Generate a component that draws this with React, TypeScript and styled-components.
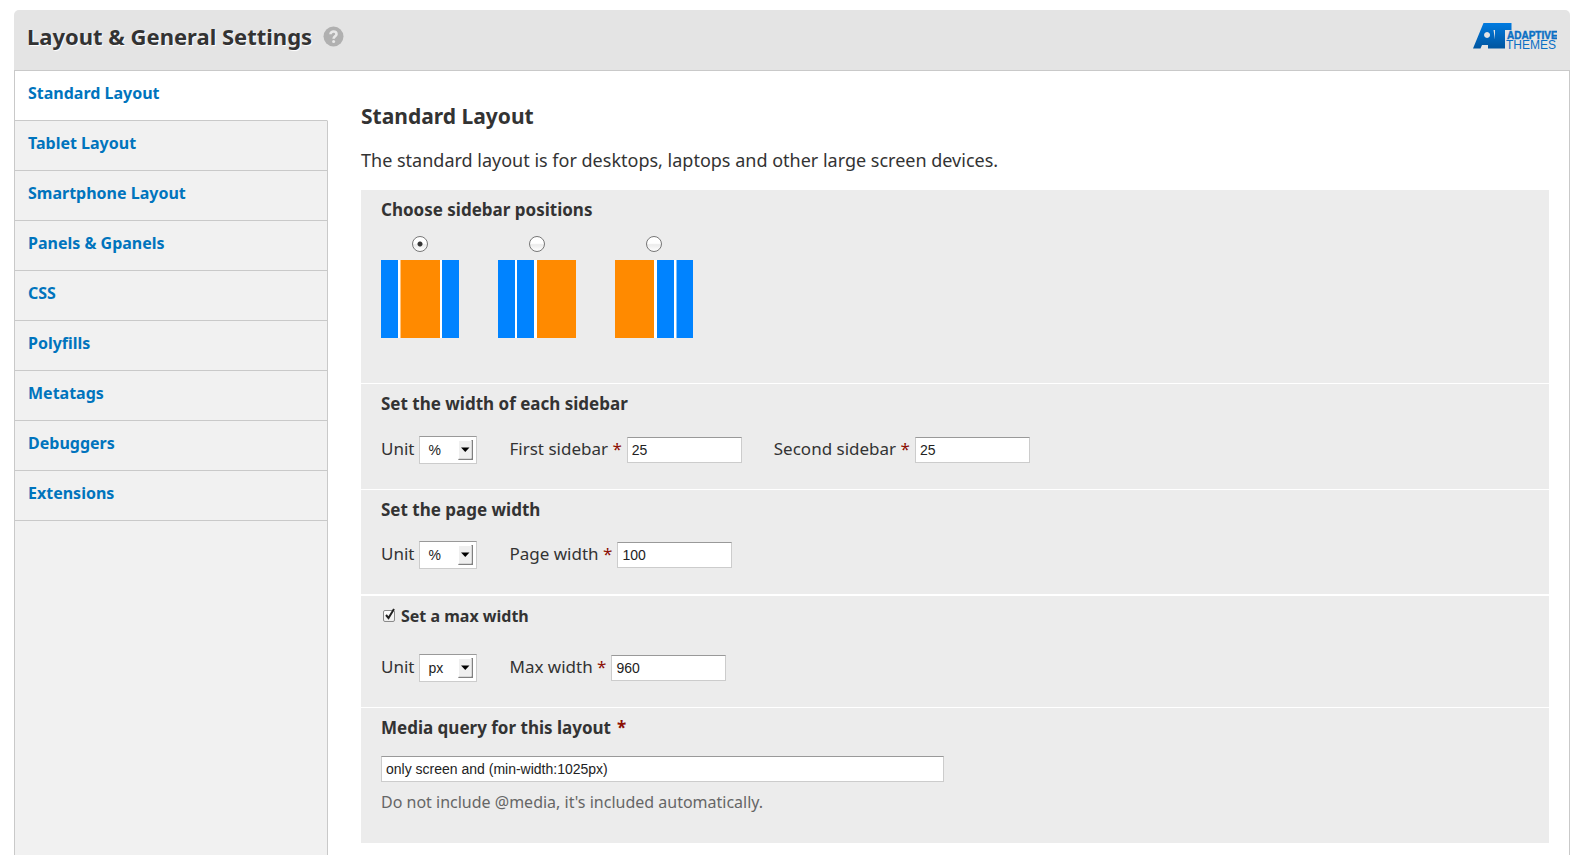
import React, { useState } from 'react';
import styled, { createGlobalStyle } from 'styled-components';

const GlobalStyle = createGlobalStyle`
  * { box-sizing: border-box; }
  html, body, #root { height: 100%; }
  body {
    margin: 0;
    background: #fff;
    color: #333;
    font-family: "Noto Sans", "Open Sans", sans-serif;
    font-size: 17px;
    line-height: 24px;
  }
`;

const Page = styled.div`
  display: flex;
  flex-direction: column;
  min-height: 100%;
  padding: 10px 7px 0 14px;
`;

const Header = styled.header`
  display: flex;
  justify-content: space-between;
  align-items: flex-start;
  height: 60px;
  padding: 11px 13px 0 13px;
  background: #e4e4e4;
  border-radius: 5px 5px 0 0;
`;

const TitleGroup = styled.div`
  display: flex;
  align-items: center;
  gap: 11px;
`;

const Title = styled.h1`
  margin: 0;
  font-size: 22px;
  line-height: 30px;
  font-weight: 700;
  text-shadow: 1px 1px 1px #fff;
`;

const HelpButton = styled.button`
  display: flex;
  padding: 0;
  border: 0;
  background: none;
`;

const LogoLink = styled.a`
  display: block;
  padding-top: 2px;
`;

const Body = styled.div`
  display: flex;
  flex: 1;
  border: 1px solid #c9c9c9;
  border-bottom: 0;
`;

const Nav = styled.nav`
  width: 313px;
  flex: none;
  display: flex;
  flex-direction: column;
`;

const Tab = styled.a<{ $active?: boolean }>`
  display: block;
  height: 50px;
  padding: 10px 13px 0;
  font-size: 16px;
  font-weight: 700;
  color: #0074bd;
  text-decoration: none;
  background: ${p => (p.$active ? '#fff' : '#f1f1f1')};
  border-bottom: 1px solid #c9c9c9;
  border-right: 1px solid ${p => (p.$active ? '#fff' : '#c9c9c9')};
`;

const NavFill = styled.div`
  flex: 1;
  background: #f1f1f1;
  border-right: 1px solid #c9c9c9;
`;

const Main = styled.main`
  flex: 1;
  padding: 30px 20px 12px 33px;
`;

const PaneTitle = styled.h2`
  margin: 0 0 17px;
  font-size: 21px;
  line-height: 30px;
  font-weight: 700;
`;

const Intro = styled.p`
  margin: 0 0 18px;
  font-size: 18px;
`;

const Panel = styled.form`
  background: #ececec;
`;

const Section = styled.section<{ $bottom: number; $rule?: number }>`
  padding: 8px 20px ${p => p.$bottom}px;
  border-bottom: ${p => p.$rule ?? 1}px solid #fff;
`;

const Heading = styled.h3<{ $gap: number; $small?: boolean }>`
  display: flex;
  align-items: center;
  gap: 6px;
  margin: 0 0 ${p => p.$gap}px;
  font-size: ${p => (p.$small ? 16 : 17)}px;
  line-height: 24px;
  font-weight: 700;
`;

const Required = styled.span`
  color: #8c0f04;
`;

const Choices = styled.div`
  display: flex;
  gap: 39px;
`;

const Choice = styled.label`
  display: flex;
  flex-direction: column;
  align-items: center;
  gap: 8px;
`;

const Radio = styled.input`
  appearance: none;
  width: 16px;
  height: 16px;
  margin: 0;
  border: 1px solid #777;
  border-radius: 50%;
  background: linear-gradient(#fff 0 45%, #ebebeb 55%, #fff);
  &:checked {
    background: radial-gradient(circle, #333 0 2px, transparent 3px), linear-gradient(#fff 0 45%, #ebebeb 55%, #fff);
  }
`;

const Fields = styled.div`
  display: flex;
  align-items: center;
  gap: 32px;
`;

const Field = styled.label`
  display: flex;
  align-items: center;
  gap: 5px;
`;

const FieldLabel = styled.span`
  padding-bottom: 2px;
`;

const TextInput = styled.input<{ $wide?: boolean }>`
  display: block;
  width: ${p => (p.$wide ? '563px' : '115px')};
  max-width: 100%;
  height: 26px;
  padding: 0 4px;
  border: 1px solid #ccc;
  border-top-color: #999;
  border-radius: 0;
  background: #fff;
  color: #222;
  font: 14px "Liberation Sans", Arial, sans-serif;
`;

const SelectBox = styled.span`
  position: relative;
  display: block;
`;

const Select = styled.select`
  appearance: none;
  display: block;
  width: 58px;
  height: 28px;
  padding: 0 8px;
  border: 1px solid #ccc;
  border-top-color: #999;
  border-radius: 0;
  background: #fff;
  color: #222;
  font: 14px "Liberation Sans", Arial, sans-serif;
`;

const Arrow = styled.svg`
  position: absolute;
  right: 4px;
  top: 4px;
  pointer-events: none;
`;

const Check = styled.span`
  position: relative;
  display: flex;
  padding-left: 2px;
  svg { position: absolute; left: 2px; top: -3px; pointer-events: none; }
`;

const Checkbox = styled.input`
  appearance: none;
  width: 12px;
  height: 12px;
  margin: 0;
  border: 1px solid #8a8a8a;
  border-radius: 2px;
  background: linear-gradient(#fff, #eee);
  &:not(:checked) + svg { display: none; }
`;

const HelpText = styled.p`
  margin: 8px 0 0;
  font-size: 16px;
  color: #666;
`;

const tabs = ['Standard Layout', 'Tablet Layout', 'Smartphone Layout', 'Panels & Gpanels', 'CSS', 'Polyfills', 'Metatags', 'Debuggers', 'Extensions'];

const BLUE = '#0083ff';
const ORANGE = '#ff8a00';

type Column = [x: number, width: number, color: string];
const layouts: { name: string; columns: Column[] }[] = [
  { name: 'Sidebars on both sides', columns: [[0, 17, BLUE], [19.5, 39.5, ORANGE], [61, 17, BLUE]] },
  { name: 'Both sidebars left', columns: [[0, 17, BLUE], [19, 17, BLUE], [39, 39, ORANGE]] },
  { name: 'Both sidebars right', columns: [[0, 39, ORANGE], [42, 17, BLUE], [61.5, 16.5, BLUE]] },
];

function UnitSelect({ unit }: { unit: string }) {
  return (
    <Field>
      <FieldLabel>Unit</FieldLabel>
      <SelectBox>
        <Select defaultValue={unit}>
          <option>%</option>
          <option>px</option>
          <option>em</option>
        </Select>
        <Arrow width="15" height="20" viewBox="0 0 15 20">
          <path d="M0 20L1 18.5H13.5V0H15V20Z" fill="#808080" />
          <path d="M1 1H13.5V18.5H1Z" fill="#efefef" />
          <path d="M3 7.5H11.5L7.25 12Z" fill="#000" />
        </Arrow>
      </SelectBox>
    </Field>
  );
}

function RequiredField({ label, value }: { label: string; value: string }) {
  return (
    <Field>
      <FieldLabel>{label} <Required>*</Required></FieldLabel>
      <TextInput defaultValue={value} />
    </Field>
  );
}

function Logo() {
  return (
    <svg width="84" height="28" viewBox="0 0 84 28" role="img" aria-label="Adaptive Themes">
      <defs>
        <linearGradient id="mark" x1="0" y1="0" x2="0" y2="1">
          <stop offset="0" stopColor="#007be0" />
          <stop offset="1" stopColor="#00559f" />
        </linearGradient>
      </defs>
      <path fillRule="evenodd" fill="url(#mark)" d="M10.500 0H38.500V7H32V25.500H15V22H9L7.500 25.500H0ZM14 9a3 3 0 1 0 0.1 0ZM20.500 7L22 16.500V7Z" />
      <text x="34" y="16" fontFamily="Liberation Sans" fontWeight="700" fontSize="10" fill="#0a6fc4" stroke="#0a6fc4" strokeWidth="0.4">ADAPTIVE</text>
      <text x="33" y="26" fontFamily="Liberation Sans" fontSize="12" fill="#0a6fc4">THEMES</text>
    </svg>
  );
}

export default function App() {
  const [position, setPosition] = useState(0);
  return (
    <>
      <GlobalStyle />
      <Page>
        <Header>
          <TitleGroup>
            <Title>Layout &amp; General Settings</Title>
            <HelpButton type="button" aria-label="Help">
              <svg width="21" height="21" viewBox="0 0 21 21">
                <circle cx="10.5" cy="10.5" r="10" fill="#b0b0b0" />
                <path d="M7.500 8.200C7.500 4.500 13.500 4.700 13.500 8.200C13.500 10.300 10.600 10.400 10.600 12.800" fill="none" stroke="#e8e8e8" strokeWidth="2.6" />
                <circle cx="10.600" cy="15.600" r="1.500" fill="#e8e8e8" />
              </svg>
            </HelpButton>
          </TitleGroup>
          <LogoLink href="#"><Logo /></LogoLink>
        </Header>
        <Body>
          <Nav>
            {tabs.map((tab, i) => <Tab key={tab} href="#" $active={i === 0}>{tab}</Tab>)}
            <NavFill />
          </Nav>
          <Main>
            <PaneTitle>Standard Layout</PaneTitle>
            <Intro>The standard layout is for desktops, laptops and other large screen devices.</Intro>
            <Panel>
              <Section $bottom={45}>
                <Heading $gap={14}>Choose sidebar positions</Heading>
                <Choices>
                  {layouts.map((layout, i) => (
                    <Choice key={layout.name}>
                      <Radio type="radio" name="position" aria-label={layout.name} checked={position === i} onChange={() => setPosition(i)} />
                      <svg width="78" height="78" viewBox="0 0 78 78">
                        <rect width="78" height="78" fill="#fff" />
                        {layout.columns.map(([x, width, color]) => <rect key={x} x={x} width={width} height="78" fill={color} />)}
                      </svg>
                    </Choice>
                  ))}
                </Choices>
              </Section>
              <Section $bottom={25}>
                <Heading $gap={20}>Set the width of each sidebar</Heading>
                <Fields>
                  <UnitSelect unit="%" />
                  <RequiredField label="First sidebar" value="25" />
                  <RequiredField label="Second sidebar" value="25" />
                </Fields>
              </Section>
              <Section $bottom={25} $rule={2}>
                <Heading $gap={19}>Set the page width</Heading>
                <Fields>
                  <UnitSelect unit="%" />
                  <RequiredField label="Page width" value="100" />
                </Fields>
              </Section>
              <Section $bottom={25}>
                <Heading as="label" $gap={26} $small>
                  <Check>
                    <Checkbox type="checkbox" defaultChecked />
                    <svg width="13" height="14" viewBox="0 0 13 14">
                      <path d="M3 8L5.500 11L11 2" fill="none" stroke="#222" strokeWidth="2" />
                    </svg>
                  </Check>
                  Set a max width
                </Heading>
                <Fields>
                  <UnitSelect unit="px" />
                  <RequiredField label="Max width" value="960" />
                </Fields>
              </Section>
              <Section $bottom={29} $rule={0}>
                <Heading as="label" htmlFor="media" $gap={16}>Media query for this layout <Required>*</Required></Heading>
                <TextInput id="media" $wide defaultValue="only screen and (min-width:1025px)" />
                <HelpText>Do not include @media, it's included automatically.</HelpText>
              </Section>
            </Panel>
          </Main>
        </Body>
      </Page>
    </>
  );
}
